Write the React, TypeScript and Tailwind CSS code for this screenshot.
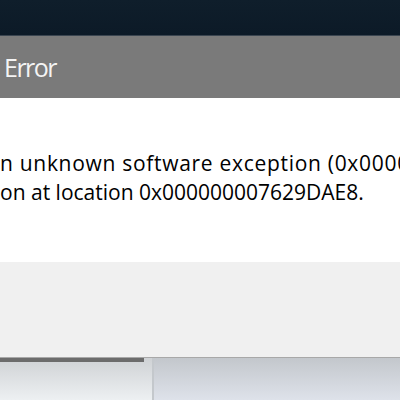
export default function App() {
  return (
    <div className="flex h-[400px] w-[400px] flex-col overflow-hidden bg-white font-['Open_Sans',sans-serif]">
      {/* desktop behind the dialog */}
      <div className="h-[36px] shrink-0 bg-gradient-to-b from-[#0f1e2b] to-[#0c1a27] border-b border-[#3a4550]" />

      {/* title bar */}
      <div className="h-[62px] shrink-0 bg-[#7a7a7a] pl-[4px] pt-[18px]">
        <span className="block text-[25px] leading-[26px] tracking-[-1.5px] text-[#f4f4f4]">Error</span>
      </div>

      {/* message */}
      <div className="h-[164px] shrink-0 overflow-hidden whitespace-nowrap bg-white pt-[51px] text-[21px] leading-[28.5px] text-black">
        <p className="tracking-[0.7px]">n unknown software exception (0x00000409) occurred in the</p>
        <p>on at location 0x000000007629DAE8.</p>
      </div>

      {/* button strip */}
      <div className="h-[96px] shrink-0 bg-[#f0f0f0] border-b border-[#a8a8a8]" />

      {/* taskbar below */}
      <div className="flex flex-1">
        <div className="w-[152px] bg-gradient-to-b from-[#cfd2d5] to-[#edf0f2]">
          <div className="h-[4px] w-[144px] bg-[#6c6c6c]" />
        </div>
        <div className="w-[2px] bg-[#c4c8cc]" />
        <div className="flex-1 bg-gradient-to-b from-[#c3c7cc] to-[#dee2ea]" />
      </div>
    </div>
  );
}
